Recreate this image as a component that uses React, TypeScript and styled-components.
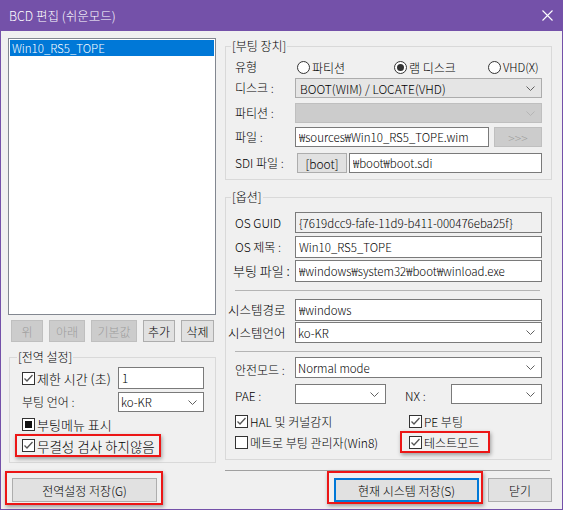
import React from "react";
import styled, { createGlobalStyle } from "styled-components";

const PURPLE = "#7451a9";

const GlobalStyle = createGlobalStyle`
  html, body {
    margin: 0;
    padding: 0;
    background: #f0f0f0;
  }
  * {
    box-sizing: border-box;
  }
`;

type ComboKind = "list" | "edit" | "off";
type CheckState = "on" | "off" | "mixed";

function CloseIcon() {
  return (
    <svg width="11" height="11" viewBox="0 0 11 11">
      <path d="M0.5 0.5 L10.5 10.5 M10.5 0.5 L0.5 10.5" stroke="#fff" strokeWidth="1.1" />
    </svg>
  );
}

function CheckBox({ state }: { state: CheckState }) {
  return (
    <svg width="13" height="13" viewBox="0 0 13 13">
      <rect x="0.5" y="0.5" width="12" height="12" fill="#fff" stroke="#333" />
      {state === "on" && (
        <path d="M2.5 6.5 L5 9 L10.5 3" fill="none" stroke="#555" strokeWidth="1.3" />
      )}
      {state === "mixed" && <rect x="3" y="3" width="7" height="7" fill="#111" />}
    </svg>
  );
}

function Radio({ on }: { on?: boolean }) {
  return (
    <svg width="13" height="13" viewBox="0 0 13 13">
      <circle cx="6.5" cy="6.5" r="6" fill="#fff" stroke="#333" />
      {on && <circle cx="6.5" cy="6.5" r="3.5" fill="#333" />}
    </svg>
  );
}

function Chevron({ off }: { off?: boolean }) {
  return (
    <svg width="9" height="5" viewBox="0 0 9 5">
      <path d="M0.5 0.5 L4.5 4.5 L8.5 0.5" fill="none" stroke={off ? "#b5b5b5" : "#606060"} />
    </svg>
  );
}

function Combo({ value, kind }: { value?: string; kind: ComboKind }) {
  return (
    <ComboBox $kind={kind}>
      <span>{value}</span>
      <Chevron off={kind === "off"} />
    </ComboBox>
  );
}

function Check({ state, label, size }: { state: CheckState; label: string; size?: number }) {
  return (
    <CheckItem $size={size}>
      <CheckBox state={state} />
      <span>{label}</span>
    </CheckItem>
  );
}

function RadioOption({ on, label, small }: { on?: boolean; label: string; small?: boolean }) {
  return (
    <RadioItem $small={small}>
      <Radio on={on} />
      <span>{label}</span>
    </RadioItem>
  );
}

export default function App() {
  return (
    <>
      <GlobalStyle />
      <Window>
        <TitleBar>
          <span>BCD 편집 (쉬운모드)</span>
          <CloseIcon />
        </TitleBar>

        <Body>
          <LeftCol>
            <ListBox>
              <ListItem>Win10_RS5_TOPE</ListItem>
            </ListBox>
            <ToolRow>
              <ToolButton $w={32} disabled>위</ToolButton>
              <ToolButton $w={36} disabled>아래</ToolButton>
              <ToolButton $w={46} disabled>기본값</ToolButton>
              <ToolButton $w={32}>추가</ToolButton>
              <ToolButton $w={33}>삭제</ToolButton>
            </ToolRow>

            <GroupBox $h={114} $mt={7} $ml={1}>
              <Legend $indent={7}>[전역 설정]</Legend>
              <GlobalRow $h={22} $mt={2}>
                <Check state="on" label="제한 시간 (초)" size={13} />
                <TextBox readOnly value="1" />
              </GlobalRow>
              <GlobalRow $h={20} $mt={3}>
                <Label>부팅 언어 :</Label>
                <Combo kind="edit" value="ko-KR" />
              </GlobalRow>
              <GlobalRow $h={19} $mt={3}>
                <Check state="mixed" label="부팅메뉴 표시" size={13} />
              </GlobalRow>
              <Highlight $w={146} $h={23} $pad="0 0 0 5px" $ml={5}>
                <Check state="on" label="무결성 검사 하지않음" size={13.5} />
              </Highlight>
            </GroupBox>
          </LeftCol>

          <RightCol>
            <GroupBox $h={142}>
              <Legend $indent={5}>[부팅 장치]</Legend>
              <Row $h={20} $mt={3}>
                <Label>유형</Label>
                <RadioRow>
                  <RadioOption label="파티션" />
                  <RadioOption on label="램 디스크" />
                  <RadioOption label="VHD(X)" small />
                </RadioRow>
              </Row>
              <Row $h={20} $mt={1}>
                <Label>디스크 :</Label>
                <Combo kind="list" value="BOOT(WIM) / LOCATE(VHD)" />
              </Row>
              <Row $h={20} $mt={5}>
                <Label>파티션 :</Label>
                <Combo kind="off" />
              </Row>
              <Row $h={20} $mt={4}>
                <Label>파일 :</Label>
                <FieldPair $gap={5}>
                  <TextBox readOnly value="₩sources₩Win10_RS5_TOPE.wim" />
                  <ToolButton $w={48} disabled>&gt;&gt;&gt;</ToolButton>
                </FieldPair>
              </Row>
              <Row $h={20} $mt={6}>
                <Label>SDI 파일 :</Label>
                <FieldPair $gap={2} $lead={2} $first>
                  <ToolButton $w={50}>[boot]</ToolButton>
                  <TextBox readOnly value="₩boot₩boot.sdi" />
                </FieldPair>
              </Row>
            </GroupBox>

            <GroupBox $h={271} $mt={9}>
              <Legend $indent={5}>[옵션]</Legend>
              <Row $h={21} $mt={7}>
                <Label>OS GUID</Label>
                <TextBox readOnly $ro value="{7619dcc9-fafe-11d9-b411-000476eba25f}" />
              </Row>
              <Row $h={22} $mt={3}>
                <Label>OS 제목 :</Label>
                <TextBox readOnly value="Win10_RS5_TOPE" />
              </Row>
              <Row $h={22} $mt={2}>
                <Label $size={13} $pull={2}>부팅 파일 :</Label>
                <TextBox readOnly value="₩windows₩system32₩boot₩winload.exe" />
              </Row>
              <Rule $mt={8} />
              <Row $h={22} $mt={8}>
                <Label $size={12.5} $pull={7}>시스템경로</Label>
                <TextBox readOnly value="₩windows" />
              </Row>
              <Row $h={21} $mt={1}>
                <Label $size={12.5} $pull={7}>시스템언어</Label>
                <Combo kind="edit" value="ko-KR" />
              </Row>
              <Rule $mt={8} />
              <Row $h={21} $mt={5}>
                <Label $low>안전모드 :</Label>
                <Combo kind="edit" value="Normal mode" />
              </Row>
              <PaeRow $h={20} $mt={6}>
                <Label $low>PAE :</Label>
                <Combo kind="edit" />
                <span />
                <Label $low>NX :</Label>
                <Combo kind="edit" />
              </PaeRow>
              <CheckRow $h={17} $mt={9}>
                <Check state="on" label="HAL 및 커널감지" />
                <CheckCell>
                  <Check state="on" label="PE 부팅" />
                </CheckCell>
              </CheckRow>
              <CheckRow $h={22} $mt={1}>
                <Check state="off" label="메트로 부팅 관리자(Win8)" />
                <Highlight $w={90} $h={22} $pad="0 0 0 7px">
                  <Check state="on" label="테스트모드" />
                </Highlight>
              </CheckRow>
            </GroupBox>
            <BottomRule />
          </RightCol>
        </Body>

        <Footer>
          <Highlight $w={158} $h={34} $pad="5px 0 0 5px" $top>
            <DialogButton $w={145}>전역설정 저장(G)</DialogButton>
          </Highlight>
          <Actions>
            <Highlight $w={156} $h={33} $pad="5px 0 0 5px" $top>
              <DialogButton $w={145} $focus>현재 시스템 저장(S)</DialogButton>
            </Highlight>
            <DialogButton $w={64} $mt={7}>닫기</DialogButton>
          </Actions>
        </Footer>
      </Window>
    </>
  );
}

const Window = styled.div`
  width: 563px;
  height: 510px;
  display: flex;
  flex-direction: column;
  background: #f0f0f0;
  border: 1px solid ${PURPLE};
  border-top: none;
  font-family: "Noto Sans CJK KR", "Noto Sans", sans-serif;
  font-size: 12px;
  font-weight: 300;
  color: #000;
`;

const TitleBar = styled.div`
  flex: none;
  height: 31px;
  display: flex;
  align-items: center;
  justify-content: space-between;
  padding: 0 9px 0 8px;
  background: ${PURPLE};
  color: #fff;
  font-size: 12.5px;
`;

const Body = styled.div`
  display: flex;
  align-items: flex-start;
  gap: 9px;
  padding: 7px 0 0 7px;
`;

const LeftCol = styled.div`
  width: 208px;
  display: flex;
  flex-direction: column;
`;

const RightCol = styled.div`
  width: 327px;
  display: flex;
  flex-direction: column;
`;

const ListBox = styled.div`
  height: 277px;
  padding: 1px;
  border: 1px solid #828790;
  background: #fff;
`;

const ListItem = styled.div`
  height: 16px;
  line-height: 16px;
  padding-left: 2px;
  font-size: 11.5px;
  background: #0078d7;
  color: #fff;
`;

const ToolRow = styled.div`
  display: flex;
  gap: 6px;
  height: 22px;
  margin: 5px 0 0 3px;
`;

const ToolButton = styled.button<{ $w: number }>`
  flex: none;
  width: ${(p) => p.$w}px;
  height: 100%;
  padding: 0;
  font: inherit;
  font-size: 12px;
  color: #000;
  background: #e1e1e1;
  border: 1px solid #adadad;
  &:disabled {
    color: #9c9c9c;
    background: #cccccc;
    border-color: #bfbfbf;
  }
`;

const GroupBox = styled.fieldset<{ $h: number; $mt?: number; $ml?: number }>`
  height: ${(p) => p.$h}px;
  min-width: 0;
  margin: ${(p) => p.$mt ?? 0}px 0 0 ${(p) => p.$ml ?? 0}px;
  padding: 0;
  border: 1px solid #d9d9d9;
`;

const Legend = styled.legend<{ $indent: number }>`
  margin-left: ${(p) => p.$indent}px;
  padding: 0 1px;
  font-size: 12px;
  line-height: 16px;
`;

const Row = styled.div<{ $h: number; $mt: number }>`
  display: grid;
  grid-template-columns: 60px 1fr;
  align-items: stretch;
  height: ${(p) => p.$h}px;
  margin-top: ${(p) => p.$mt}px;
  padding: 0 9px 0 9px;
`;

const GlobalRow = styled(Row)`
  grid-template-columns: 96px 86px;
  padding: 0 0 0 12px;
`;

const PaeRow = styled(Row)`
  grid-template-columns: 60px 91px 19px 46px 1fr;
`;

const CheckRow = styled(Row)`
  grid-template-columns: 165px 1fr;
  align-items: center;
`;

const CheckCell = styled.div`
  padding-left: 9px;
`;

const Label = styled.span<{ $size?: number; $pull?: number; $low?: boolean }>`
  align-self: ${(p) => (p.$low ? "end" : "center")};
  margin-left: -${(p) => p.$pull ?? 0}px;
  font-size: ${(p) => p.$size ?? 12}px;
  line-height: 16px;
  white-space: nowrap;
`;

const RadioRow = styled.div`
  display: grid;
  grid-template-columns: 97px 94px 1fr;
  align-items: center;
  padding-left: 2px;
`;

const RadioItem = styled.label<{ $small?: boolean }>`
  display: flex;
  align-items: center;
  gap: 2px;
  font-size: ${(p) => (p.$small ? 11.5 : 12)}px;
  white-space: nowrap;
  svg {
    flex: none;
  }
`;

const CheckItem = styled.label<{ $size?: number }>`
  display: flex;
  align-items: center;
  gap: 2px;
  font-size: ${(p) => p.$size ?? 12}px;
  white-space: nowrap;
  svg {
    flex: none;
  }
`;

const TextBox = styled.input<{ $ro?: boolean }>`
  width: 100%;
  min-width: 0;
  height: 100%;
  padding: 0 3px;
  font: inherit;
  font-size: 11.5px;
  color: #000;
  background: ${(p) => (p.$ro ? "#f0f0f0" : "#fff")};
  border: 1px solid #7a7a7a;
  outline: none;
`;

const ComboBox = styled.div<{ $kind: ComboKind }>`
  display: flex;
  align-items: center;
  justify-content: space-between;
  min-width: 0;
  padding: 0 6px 0 ${(p) => (p.$kind === "list" ? 4 : 2)}px;
  border: 1px solid
    ${(p) => (p.$kind === "list" ? "#acacac" : p.$kind === "off" ? "#bfbfbf" : "#7a7a7a")};
  background: ${(p) => (p.$kind === "list" ? "#e5e5e5" : p.$kind === "off" ? "#cccccc" : "#fff")};
  font-size: ${(p) => (p.$kind === "list" ? 12 : 11.5)}px;
  white-space: nowrap;
`;

const FieldPair = styled.div<{ $gap: number; $lead?: number; $first?: boolean }>`
  display: grid;
  grid-template-columns: ${(p) => (p.$first ? "auto 1fr" : "1fr auto")};
  gap: ${(p) => p.$gap}px;
  padding-left: ${(p) => p.$lead ?? 0}px;
  min-width: 0;
`;

const Rule = styled.div<{ $mt: number }>`
  height: 1px;
  margin: ${(p) => p.$mt}px 11px 0 9px;
  background: #b4b4b4;
`;

const BottomRule = styled.div`
  height: 1px;
  margin: 10px 2px 0 0;
  background: #a0a0a0;
`;

const Highlight = styled.div<{ $w: number; $h: number; $pad: string; $ml?: number; $top?: boolean }>`
  flex: none;
  display: flex;
  align-items: ${(p) => (p.$top ? "flex-start" : "center")};
  width: ${(p) => p.$w}px;
  height: ${(p) => p.$h}px;
  margin-left: ${(p) => p.$ml ?? 0}px;
  padding: ${(p) => p.$pad};
  border: 2px solid #ec1616;
  box-shadow: 1px 2px 4px rgba(0, 0, 0, 0.35);
`;

const Footer = styled.div`
  display: flex;
  justify-content: space-between;
  align-items: flex-start;
  padding: 0 10px 0 4px;
`;

const Actions = styled.div`
  display: flex;
  align-items: flex-start;
  gap: 5px;
`;

const DialogButton = styled.button<{ $w: number; $focus?: boolean; $mt?: number }>`
  flex: none;
  width: ${(p) => p.$w}px;
  height: 24px;
  margin-top: ${(p) => p.$mt ?? 0}px;
  padding: 0;
  font: inherit;
  font-size: 12px;
  color: #000;
  background: #e1e1e1;
  border: ${(p) => (p.$focus ? "2px solid #0078d7" : "1px solid #adadad")};
`;
